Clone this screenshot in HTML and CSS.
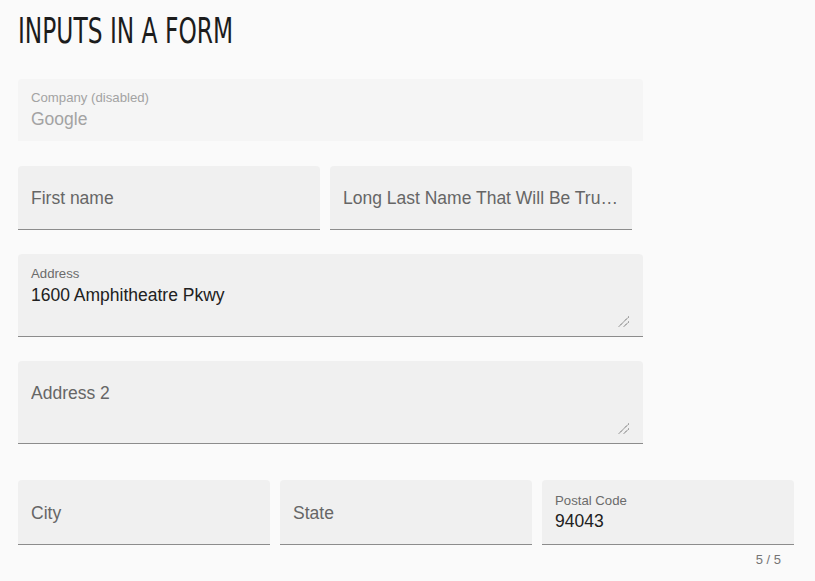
FILE: index.html
```html
<!DOCTYPE html>
<html>
<head>
<meta charset="utf-8">
<link rel="stylesheet" href="styles.css">
</head>
<body>
<main class="page">
  <h1 class="title"><span class="title-text">INPUTS IN A FORM</span></h1>
  <form class="form">
    <div class="field field-disabled field-full">
      <div class="label-small">Company (disabled)</div>
      <div class="value value-disabled">Google</div>
    </div>

    <div class="row row-two">
      <div class="field field-empty">
        <div class="placeholder">First name</div>
      </div>
      <div class="field field-empty">
        <div class="placeholder">Long Last Name That Will Be Tru…</div>
      </div>
    </div>

    <div class="field field-area field-full">
      <div class="label-small">Address</div>
      <div class="value">1600 Amphitheatre Pkwy</div>
      <div class="resize-row">
        <svg class="resizer" width="12" height="12" viewBox="0 0 12 12">
          <path d="M11 0.5 L0.5 11" stroke="#555" stroke-width="1" stroke-dasharray="1.2 0.6"/>
          <path d="M11 5.5 L5.5 11" stroke="#555" stroke-width="1" stroke-dasharray="1.2 0.6"/>
        </svg>
      </div>
    </div>

    <div class="field field-area2 field-full">
      <div class="placeholder">Address 2</div>
      <div class="resize-row resize-row2">
        <svg class="resizer" width="12" height="12" viewBox="0 0 12 12">
          <path d="M11 0.5 L0.5 11" stroke="#555" stroke-width="1" stroke-dasharray="1.2 0.6"/>
          <path d="M11 5.5 L5.5 11" stroke="#555" stroke-width="1" stroke-dasharray="1.2 0.6"/>
        </svg>
      </div>
    </div>

    <div class="row row-three">
      <div class="cell">
        <div class="field field-empty field-tall">
          <div class="placeholder">City</div>
        </div>
      </div>
      <div class="cell">
        <div class="field field-empty field-tall">
          <div class="placeholder">State</div>
        </div>
      </div>
      <div class="cell">
        <div class="field field-filled">
          <div class="label-small">Postal Code</div>
          <div class="value">94043</div>
        </div>
        <div class="hint">5 / 5</div>
      </div>
    </div>
  </form>
</main>
</body>
</html>
```

FILE: styles.css
```css
* { box-sizing: border-box; }
html, body {
  margin: 0;
  background: #fafafa;
}
body {
  font-family: "Liberation Sans", Arial, sans-serif;
  color: #212121;
}
.page {
  padding: 11px 18px 0 18px;
}
.title {
  margin: 0 0 28px 0;
  font-family: "DejaVu Sans Condensed", "DejaVu Sans", sans-serif;
  font-stretch: condensed;
  font-weight: normal;
  font-size: 36px;
  line-height: 40px;
  height: 40px;
  color: #1c1c1c;
}
.title-text {
  display: inline-block;
  transform-origin: 0 50%;
  transform: scaleX(0.72);
  white-space: nowrap;
}
.form {
  display: flex;
  flex-direction: column;
  width: 776px;
}
.field {
  background: #f0f0f0;
  border-radius: 4px 4px 0 0;
  border-bottom: 1px solid #8c8c8c;
  padding: 0 13px;
  display: flex;
  flex-direction: column;
  min-width: 0;
}
.field-full { width: 625px; }
.field-disabled {
  background: #f5f5f5;
  border-bottom: none;
  padding-top: 11px;
  padding-bottom: 12px;
  margin-bottom: 25px;
}
.label-small {
  font-size: 13.2px;
  line-height: 16px;
  color: #6b6b6b;
}
.field-disabled .label-small { color: #a3a3a3; }
.value {
  font-size: 17.5px;
  line-height: 20px;
  margin-top: 2px;
  color: #212121;
  white-space: nowrap;
}
.field-disabled .value { margin-top: 3px; }
.value-disabled { color: #a3a3a3; }
.placeholder {
  font-size: 17.5px;
  line-height: 20px;
  color: #666666;
  white-space: nowrap;
  overflow: hidden;
}
.row { display: grid; }
.row-two {
  grid-template-columns: 302px 302px;
  column-gap: 10px;
  margin-bottom: 24px;
}
.row-three {
  grid-template-columns: 252px 252px 252px;
  column-gap: 10px;
}
.field-empty {
  padding-top: 22px;
  padding-bottom: 21px;
}
.field-tall {
  padding-top: 23px;
  padding-bottom: 21px;
}
.field-area {
  padding-top: 12px;
  padding-bottom: 8px;
  margin-bottom: 24px;
}
.field-area .value { margin-top: 3px; }
.field-area .resize-row { height: 23px; }
.field-area2 {
  padding-top: 22px;
  padding-bottom: 8px;
  margin-bottom: 36px;
}
.resize-row {
  height: 23px;
  display: flex;
  justify-content: flex-end;
  align-items: flex-end;
}
.field-area2 .resize-row2 { height: 32px; }
.resizer { display: block; }
.field-filled {
  padding-top: 13px;
  padding-bottom: 13px;
}
.hint {
  font-size: 13px;
  line-height: 16px;
  color: #757575;
  text-align: right;
  padding: 7px 13px 0 0;
}
```
